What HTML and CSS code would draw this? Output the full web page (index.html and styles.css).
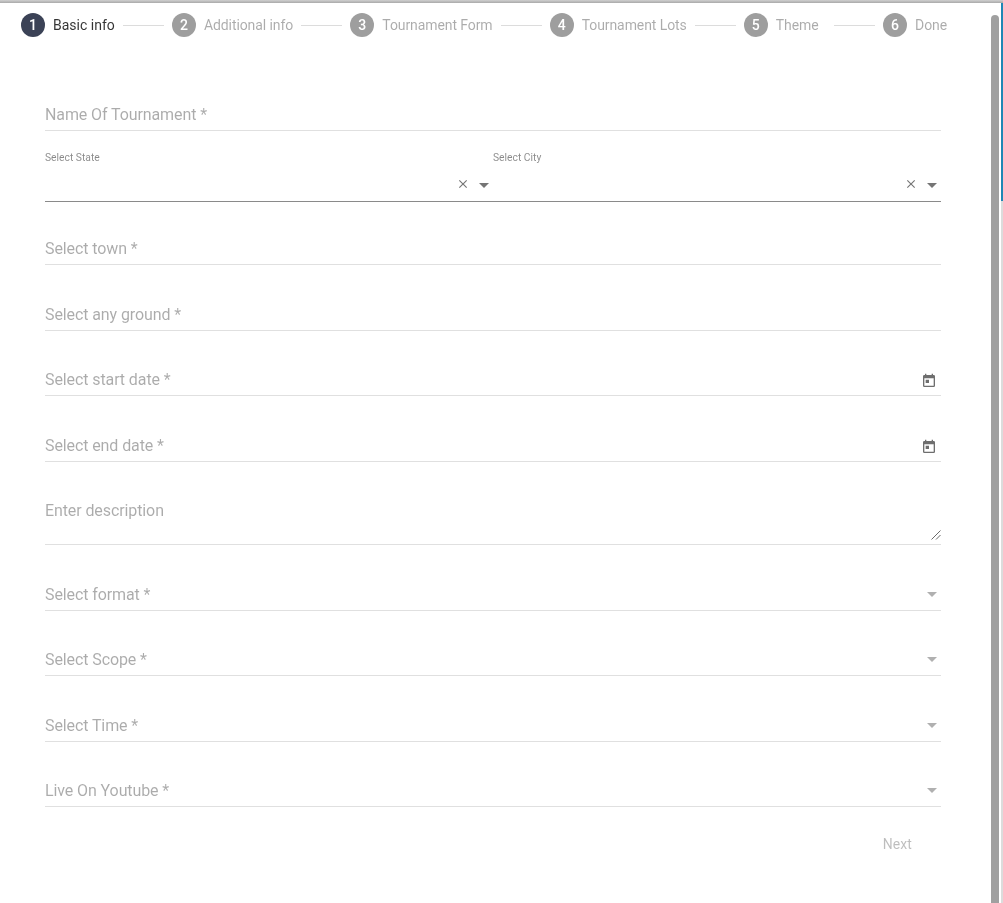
FILE: index.html
```html
<!DOCTYPE html>
<html lang="en">
<head>
<meta charset="utf-8">
<title>Create Tournament</title>
<link rel="stylesheet" href="styles.css">
</head>
<body>
<div class="top-line"></div>
<div class="window">
  <main class="panel">
    <nav class="stepper">
      <div class="step active"><span class="num">1</span><span class="label">Basic info</span></div>
      <div class="bar"></div>
      <div class="step"><span class="num">2</span><span class="label">Additional info</span></div>
      <div class="bar"></div>
      <div class="step"><span class="num">3</span><span class="label">Tournament Form</span></div>
      <div class="bar"></div>
      <div class="step"><span class="num">4</span><span class="label">Tournament Lots</span></div>
      <div class="bar"></div>
      <div class="step step-theme"><span class="num">5</span><span class="label">Theme</span></div>
      <div class="bar"></div>
      <div class="step"><span class="num">6</span><span class="label">Done</span></div>
    </nav>
    <form class="form">
      <div class="field f-name"><span class="ph">Name Of Tournament *</span></div>
      <div class="auto-row">
        <div class="auto">
          <div class="auto-label">Select State</div>
          <div class="auto-icons">
            <svg class="x" viewBox="0 0 24 24"><path d="M19 6.4 17.6 5 12 10.6 6.4 5 5 6.4 10.6 12 5 17.6 6.4 19 12 13.4 17.6 19 19 17.6 13.4 12z"/></svg>
            <span class="caret dark"></span>
          </div>
        </div>
        <div class="auto">
          <div class="auto-label">Select City</div>
          <div class="auto-icons">
            <svg class="x" viewBox="0 0 24 24"><path d="M19 6.4 17.6 5 12 10.6 6.4 5 5 6.4 10.6 12 5 17.6 6.4 19 12 13.4 17.6 19 19 17.6 13.4 12z"/></svg>
            <span class="caret dark"></span>
          </div>
        </div>
      </div>
      <div class="field f-town"><span class="ph">Select town *</span></div>
      <div class="field"><span class="ph">Select any ground *</span></div>
      <div class="field f-start"><span class="ph">Select start date *</span>
        <svg class="cal" viewBox="0 0 24 24"><path d="M19 3h-1V1h-2v2H8V1H6v2H5a2 2 0 0 0-2 2v14a2 2 0 0 0 2 2h14a2 2 0 0 0 2-2V5a2 2 0 0 0-2-2zm0 16H5V8h14v11zM7 10h5v5H7z"/></svg>
      </div>
      <div class="field"><span class="ph">Select end date *</span>
        <svg class="cal" viewBox="0 0 24 24"><path d="M19 3h-1V1h-2v2H8V1H6v2H5a2 2 0 0 0-2 2v14a2 2 0 0 0 2 2h14a2 2 0 0 0 2-2V5a2 2 0 0 0-2-2zm0 16H5V8h14v11zM7 10h5v5H7z"/></svg>
      </div>
      <div class="field f-area"><span class="ph">Enter description</span>
        <svg class="grip" viewBox="0 0 10 10"><path d="M9.5 .5 .5 9.5M9.5 5 5 9.5"/></svg>
      </div>
      <div class="field f-sel"><span class="ph">Select format *</span><span class="caret"></span></div>
      <div class="field f-sel"><span class="ph">Select Scope *</span><span class="caret"></span></div>
      <div class="field f-sel"><span class="ph">Select Time *</span><span class="caret"></span></div>
      <div class="field f-sel"><span class="ph">Live On Youtube *</span><span class="caret"></span></div>
      <div class="actions"><span class="next">Next</span></div>
    </form>
  </main>
  <aside class="scroll"><div class="thumb"></div></aside>
  <div class="edge"></div>
</div>
</body>
</html>
```
FILE: styles.css
```css
* { box-sizing: border-box; }
html, body { margin: 0; height: 100%; overflow: hidden; background: #fff; }
body { font-family: Roboto, "Liberation Sans", sans-serif; display: flex; flex-direction: column; height: 903px; }
.top-line { height: 3px; flex: none; background: linear-gradient(#d0d0d0, #a9a9a9); }
.window { flex: 1; display: flex; min-height: 0; }
.panel { width: 991px; flex: none; padding: 10px 0 0 21px; will-change: transform; }
.stepper { display: flex; align-items: center; height: 24px; width: 926px; }
.step { display: flex; align-items: center; flex: none; }
.num { width: 24px; height: 24px; border-radius: 50%; background: #9e9e9e; color: #fff; font-size: 14px; font-weight: 500; display: flex; align-items: center; justify-content: center; }
.label { margin-left: 8px; font-size: 14px; letter-spacing: -.09px; color: rgba(0,0,0,.33); }
.active .num { background: #3b4256; }
.active .label { color: rgba(0,0,0,.8); letter-spacing: 0; }
.step-theme .label { width: 50px; }
.bar { flex: 1; height: 1px; background: #dcdcdc; margin: 0 8px; }
.form { margin: 0 0 0 24px; width: 896px; padding-top: 54px; }
.field { position: relative; height: 66px; border-bottom: 1px solid #e0e0e0; display: flex; align-items: flex-end; padding-bottom: 5px; }
.ph { font-size: 16px; line-height: 20px; letter-spacing: -.1px; color: rgba(0,0,0,.33); }
.f-name { height: 40px; }
.f-town { height: 63px; }
.f-start { height: 65px; }
.f-area { height: 83px; padding-bottom: 23px; }
.f-sel { height: 65.5px; }
.auto-row { display: flex; height: 71px; border-bottom: 1px solid #8a8a8a; }
.auto { width: 448px; padding-top: 21px; position: relative; }
.auto-label { font-size: 10.3px; line-height: 12px; color: rgba(0,0,0,.46); }
.auto-icons { position: absolute; right: 0; top: 46px; width: 34px; display: flex; align-items: center; justify-content: space-between; height: 14px; }
.x { width: 14px; height: 14px; fill: #757575; margin-left: -3px; }
.caret { width: 0; height: 0; border-left: 5px solid transparent; border-right: 5px solid transparent; border-top: 5px solid #b0b0b0; }
.caret.dark { border-top-color: #757575; margin-right: 4px; margin-top: 2px; }
.f-sel .caret { position: absolute; right: 4px; bottom: 13px; }
.cal { position: absolute; right: 4px; bottom: 6px; width: 16px; height: 16px; fill: #6e6e6e; }
.grip { position: absolute; right: 0; bottom: 4px; width: 10px; height: 10px; fill: none; stroke: #444; stroke-width: .8; }
.actions { display: flex; justify-content: flex-end; padding: 29px 29px 0 0; }
.next { font-size: 14px; letter-spacing: .1px; color: rgba(0,0,0,.26); }
.scroll { width: 10px; flex: none; position: relative; }
.thumb { position: absolute; left: 0; right: 2px; top: 12px; bottom: 0; background: #a0a0a0; border-radius: 4px 4px 0 0; }
.edge { width: 2px; flex: none; background: linear-gradient(#1f87b5 0 198px, #dcdcdc 198px); }
```
